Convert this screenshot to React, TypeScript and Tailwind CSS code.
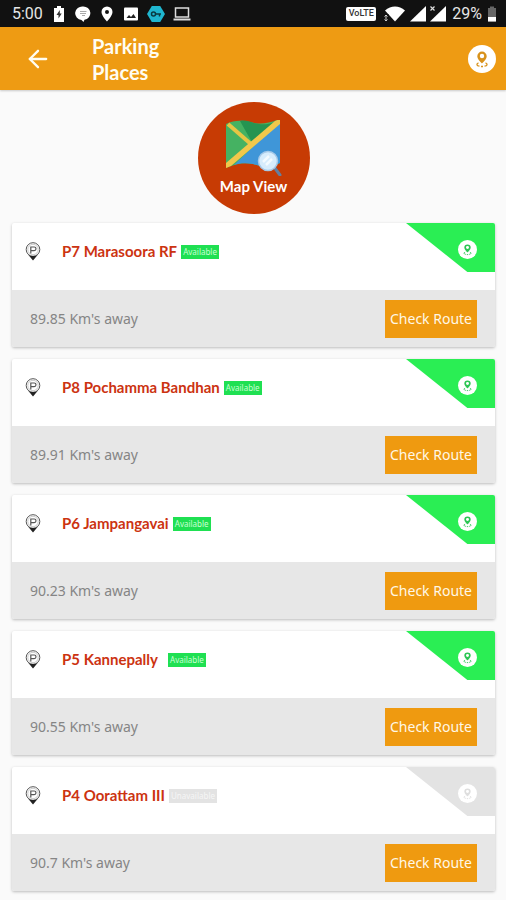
import { ArrowLeft } from 'lucide-react';

interface Place {
  name: string;
  distance: string;
  available: boolean;
  wideGap?: boolean;
}

const places: Place[] = [
  { name: 'P7 Marasoora RF', distance: '89.85', available: true },
  { name: 'P8 Pochamma Bandhan', distance: '89.91', available: true },
  { name: 'P6 Jampangavai', distance: '90.23', available: true },
  { name: 'P5 Kannepally', distance: '90.55', available: true, wideGap: true },
  { name: 'P4 Oorattam III', distance: '90.7', available: false },
];

function StatusBar() {
  return (
    <div className="flex h-[27px] items-center justify-between bg-[#111] pl-3 pr-2 font-['Roboto',sans-serif] text-base text-[#e6e6e6]">
      <div className="flex items-center gap-2">
        <span className="w-[31px]">5:00</span>
        <svg className="h-4 w-4" viewBox="0 0 16 16" fill="#fff">
          <path d="M6 0h4v2h3v14H3V2h3z" />
          <path d="M8.800 4 5.500 9h2v3.500l3.200-5H8.800z" fill="#333" />
        </svg>
        <svg className="h-4 w-4" viewBox="0 0 16 16" fill="#fff">
          <path d="M8 .5a7 6.700 0 0 1 1.500 13.300L8.500 16l-2-2A7 6.700 0 0 1 8 .5z" />
          <path d="M5 5.500h6.500M5 7.500h6M7 9.500h3" stroke="#aaa" />
        </svg>
        <svg className="h-4 w-4" viewBox="0 0 16 16" fill="#fff">
          <path fillRule="evenodd" d="M8 .5a5.500 5.500 0 0 0-5.500 5.500c0 3.800 5.500 9.500 5.500 9.500s5.500-5.700 5.500-9.500A5.500 5.500 0 0 0 8 .5zm0 3.500a2 2 0 1 1 0 4 2 2 0 0 1 0-4z" />
        </svg>
        <svg className="h-4 w-4" viewBox="0 0 16 16">
          <rect x="1" y="1.500" width="14" height="13" rx="1" fill="#fff" />
          <path d="m3.500 12 2.500-3 2 2 2.500-3 2.500 4z" fill="#222" />
        </svg>
        <svg className="h-4 w-[18px]" viewBox="0 0 18 16">
          <path d="M4.800 0h8.400L18 8l-4.800 8H4.800L0 8z" fill="#1fb6cf" />
          <circle cx="6.500" cy="8" r="2" fill="none" stroke="#0a3a42" strokeWidth="1.500" />
          <path d="M8.500 8h5.500M12.500 8v2.500" stroke="#0a3a42" strokeWidth="1.500" />
        </svg>
        <svg className="h-4 w-[18px]" viewBox="0 0 18 16" fill="none" stroke="#ddd" strokeWidth="1.500">
          <rect x="2.500" y="2" width="13" height="9" />
          <path d="M.5 13.500h17" strokeWidth="2" />
        </svg>
      </div>
      <div className="flex items-center gap-1">
        <span className="mr-1 flex h-[14px] w-[30px] items-center justify-center rounded-xs bg-white text-[9px] font-medium text-[#333]">VoLTE</span>
        <svg className="h-4 w-[22px]" viewBox="0 0 22 16" fill="#fff">
          <path d="M1 4.500C7-.8 15-.8 21 4.500L11 15.500z" />
          <path d="M0 8h4.500v8H0z" fill="#111" />
          <path d="M2 9v6M.5 10.500 2 9l1.500 1.500M.5 13.500 2 15l1.500-1.500" stroke="#ccc" fill="none" />
        </svg>
        <svg className="h-4 w-4" viewBox="0 0 16 16" fill="#fff">
          <path d="M16 0v15.500H0z" />
        </svg>
        <svg className="h-4 w-4" viewBox="0 0 16 16" fill="#fff">
          <path d="M16 0v15.500H0z" />
          <path d="m.5.5 4 4m0-4-4 4" stroke="#ddd" strokeWidth="1.200" />
        </svg>
        <span className="ml-0.5">29%</span>
        <svg className="h-4 w-3" viewBox="0 0 12 16">
          <path d="M4 .5h4v1.500h2v13.500H2V2h2z" fill="#666" />
          <path d="M2 11h8v4.500H2z" fill="#fff" />
        </svg>
      </div>
    </div>
  );
}

function LocationBadge({ className, color }: { className: string; color: string }) {
  return (
    <svg className={className} viewBox="0 0 28 28">
      <circle cx="14" cy="14" r="14" fill="#fff" />
      <path
        fill={color}
        fillRule="evenodd"
        d="M14 6.500a4.700 4.700 0 0 0-4.700 4.700c0 3 4.700 7.300 4.700 7.300s4.700-4.300 4.700-7.300A4.700 4.700 0 0 0 14 6.500zm0 2.300a2.200 2.200 0 1 1 0 4.400 2.200 2.200 0 0 1 0-4.400z"
      />
      <path d="M10.500 17.800c-2.500 1-2 3 1 3.400M17.500 17.800c2.500 1 2 3-1 3.400M13 21.500h2" fill="none" stroke={color} strokeWidth="1.300" />
    </svg>
  );
}

function MapIcon() {
  return (
    <svg className="h-14 w-14" viewBox="0 0 56 56">
      <path d="M0 4c8-4 15-4 24-2 11 3 19 1 30-3v44c-9 5-17 4-27 1-10-2-17 0-27 4z" fill="#45b262" />
      <path d="M14 1c5-1 9 0 14 2 8 2 14 1.500 20-.5L27 24z" fill="#259451" />
      <path d="M54 1v42c-9 5-17 4-27 1-7-1-13-1-19 1z" fill="#3f96d8" />
      <path d="m2 4 24 21" stroke="#e6c544" strokeWidth="4" />
      <path d="M0 43 49 1l5-2v5L5 46l-5 2z" fill="#f1c84b" />
      <path d="m48 47 6 8" stroke="#647f9f" strokeWidth="3" strokeLinecap="round" />
      <circle cx="42" cy="41" r="9.500" fill="#d6ecfc" stroke="#a5c9e8" strokeWidth="1.500" />
      <path d="m37 42 6-6M40 45l6-6" stroke="#f2faff" strokeWidth="2.500" />
    </svg>
  );
}

function ParkingPin() {
  return (
    <svg className="h-[19px] w-4 shrink-0" viewBox="0 0 16 19">
      <circle cx="8" cy="7.500" r="6.800" fill="#fff" stroke="#555" />
      <circle cx="8" cy="7.500" r="5.200" fill="none" stroke="#aaa" strokeWidth=".6" />
      <path d="M3 12.500c3 2 7 2 10 0L8 18.500z" fill="#222" />
      <path d="M5.800 11.500V5h3.400a1.800 1.800 0 0 1 0 3.600H5.800" fill="none" stroke="#555" strokeWidth="1.200" />
    </svg>
  );
}

function PlaceCard({ place }: { place: Place }) {
  return (
    <li className="overflow-hidden rounded-xs bg-white shadow-[0_1px_3px_rgba(0,0,0,0.25)]">
      <div className="relative flex h-[67px] items-center pb-[10px] pl-[13px]">
        <ParkingPin />
        <h2 className="ml-[21px] font-['Lato',sans-serif] text-[15px] font-bold text-[#cc3311]">{place.name}</h2>
        <span
          className={`flex h-[14px] items-center justify-center text-[8px] ${place.wideGap ? 'ml-[10px]' : 'ml-1'} ${
            place.available ? 'w-[38px] bg-[#1fe052] text-[#c8ffd2]' : 'w-12 bg-[#e3e3e3] text-[#f6f6f6]'
          }`}
        >
          {place.available ? 'Available' : 'Unavailable'}
        </span>
        <div
          className={`absolute right-0 top-0 flex h-[49px] w-[89px] items-center justify-end pr-[18px] pt-1 [clip-path:polygon(0_0,100%_0,100%_100%,69%_100%)] ${
            place.available ? 'bg-[#2aee54]' : 'bg-[#e3e3e3]'
          }`}
        >
          <LocationBadge className="h-[19px] w-[19px]" color={place.available ? '#2bc653' : '#dedede'} />
        </div>
      </div>
      <div className="flex h-[57px] items-center justify-between bg-[#e7e7e7] px-[18px]">
        <p className="text-sm text-[#858585]">{place.distance} Km's away</p>
        <button type="button" className="h-[38px] w-[92px] whitespace-nowrap bg-[#ef9a10] text-sm text-[#fff8e6]">
          Check Route
        </button>
      </div>
    </li>
  );
}

export default function App() {
  return (
    <div className="min-h-screen bg-[#fafafa] font-['Noto_Sans',sans-serif]">
      <StatusBar />
      <header className="flex h-[63px] items-center bg-[#ee9b13] pl-6 pr-[10px] shadow-[0_1px_2px_rgba(0,0,0,0.2)]">
        <button type="button" aria-label="Back" className="text-[#fffdf2]">
          <ArrowLeft className="h-7 w-7" strokeWidth={2} />
        </button>
        <h1 className="ml-10 w-20 font-['Lato',sans-serif] text-xl/[26px] font-bold text-[#fffdf2]">Parking Places</h1>
        <button type="button" aria-label="My location" className="ml-auto">
          <LocationBadge className="h-7 w-7" color="#d8921c" />
        </button>
      </header>
      <main className="pb-2 pl-3 pr-[11px] pt-3">
        <button
          type="button"
          className="mx-auto flex h-28 w-28 flex-col items-center rounded-full bg-[#c73b04] pt-[18px] font-['Lato',sans-serif] text-[15px]/5 font-bold text-white"
        >
          <MapIcon />
          Map View
        </button>
        <ul className="mt-[9px] flex flex-col gap-3">
          {places.map((place) => (
            <PlaceCard key={place.name} place={place} />
          ))}
        </ul>
      </main>
    </div>
  );
}
